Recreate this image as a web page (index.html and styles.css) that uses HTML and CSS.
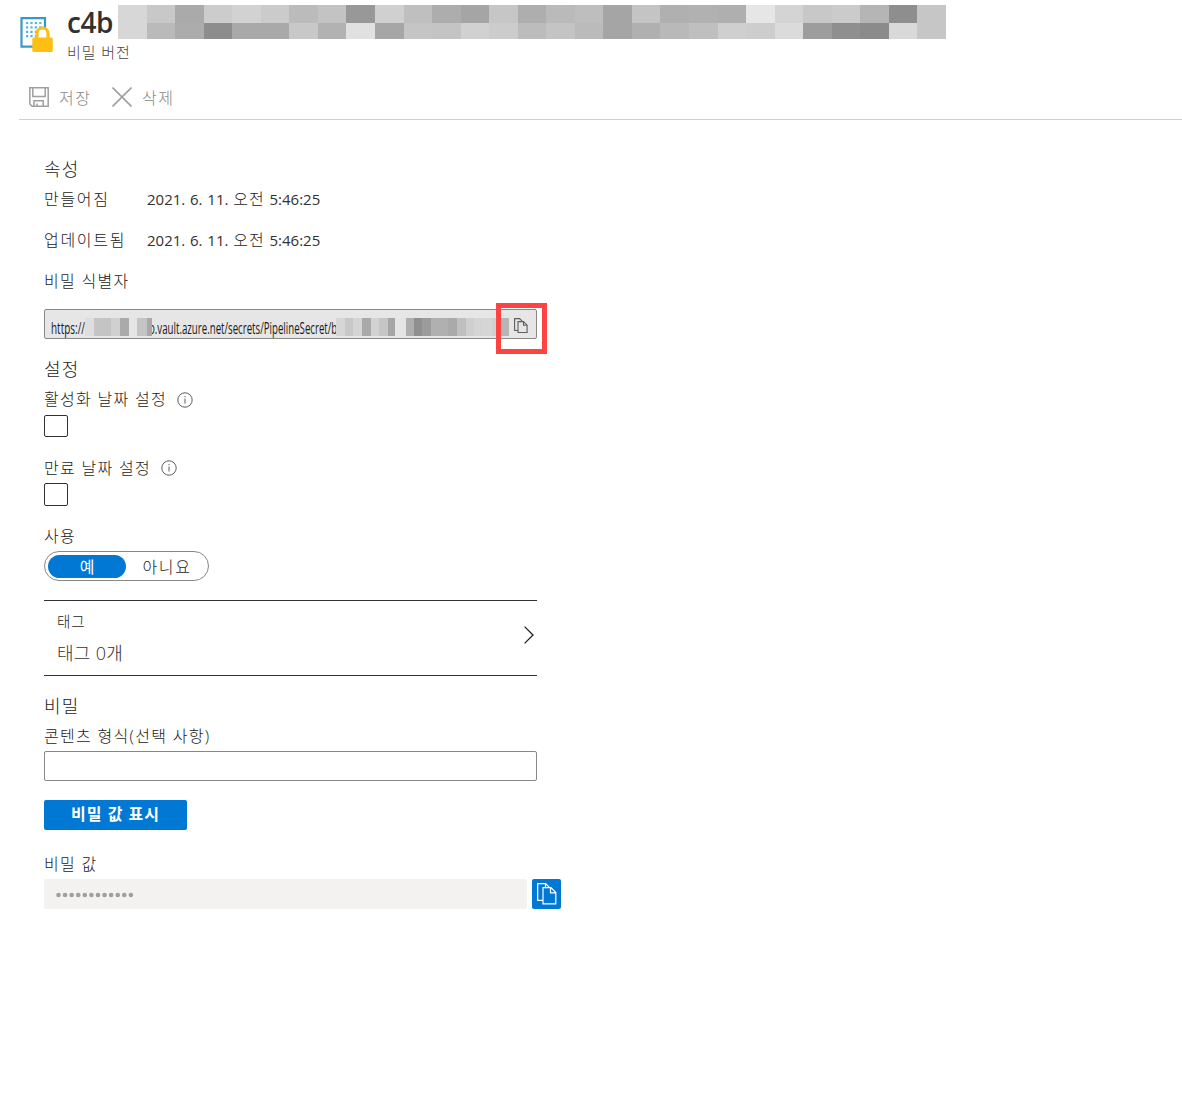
FILE: index.html
```html
<!DOCTYPE html>
<html lang="ko">
<head>
<meta charset="utf-8">
<title>비밀 버전</title>
<link rel="stylesheet" href="styles.css">
</head>
<body>
<header class="header">
  <svg class="logo" width="34" height="37" viewBox="0 0 34 37">
    <path d="M1.500 2.200h23.500v28.500H1.500z" fill="#fff" stroke="#3999c6" stroke-width="2.2"/>
    <path d="M6 7h16M6 11.400h16M6 15.800h16M6 20.200h16" stroke="#59b4d9" stroke-width="2.2" stroke-dasharray="2.200 2.200"/>
    <path d="M17 22v-4.500a5.500 5.500 0 0 1 11 0V22" fill="#fff" stroke="#fcbf12" stroke-width="3.2"/>
    <rect x="12.300" y="21.500" width="20.500" height="14.500" rx="1.500" fill="#fcbf12"/>
  </svg>
  <div class="heading">
    <div class="title-row"><h1 class="title">c4b</h1><div class="mosaic" id="title-mask"></div></div>
    <div class="subtitle">비밀 버전</div>
  </div>
</header>
<div class="toolbar">
  <svg width="20" height="20" viewBox="0 0 20 20" fill="none" stroke="#a19f9d" stroke-width="1.5"><path d="M.8.8h18.4v18.4H3L.8 17zM3.8.8v8.7h12.4V.8M5 19v-5.2h9.2V19M8 19v-2.5"/></svg>
  <span class="tool save">저장</span>
  <svg width="20" height="20" viewBox="0 0 20 20" fill="none" stroke="#a19f9d" stroke-width="1.6"><path d="M.5.5l19 19M19.5.5l-19 19"/></svg>
  <span class="tool">삭제</span>
</div>
<main class="content">
  <h2 class="section">속성</h2>
  <div class="row"><span class="name">만들어짐</span><span class="date">2021. 6. 11. <span class="meridiem">오전</span> 5:46:25</span></div>
  <div class="row updated"><span class="name">업데이트됨</span><span class="date">2021. 6. 11. <span class="meridiem">오전</span> 5:46:25</span></div>
  <div class="row identifier-label">비밀 식별자</div>
  <div class="identifier">
    <span class="url scheme"><span class="squeeze">https://</span></span>
    <span class="mosaic small" id="host-mask"></span>
    <span class="url path"><span class="squeeze">o.vault.azure.net/secrets/PipelineSecret/b</span></span>
    <span class="mosaic small" id="id-mask"></span>
    <svg class="copy" width="14" height="16" viewBox="0 0 14 16" fill="none" stroke="#605e5c" stroke-width="1.1"><path d="M4 12.5H.6V.6h5l2.6 2.6M4 3.600h5.500l3.600 3.600v7.300H4zM9.500 3.600v3.600h3.600"/></svg>
    <div class="highlight"></div>
  </div>
  <h2 class="section settings">설정</h2>
  <div class="row">활성화 날짜 설정<svg class="info" width="16" height="16" viewBox="0 0 16 16" fill="none" stroke="#605e5c"><circle cx="8" cy="8" r="7.200"/><path d="M8 6.500v5M8 4v1.200"/></svg></div>
  <div class="check"></div>
  <div class="row expires">만료 날짜 설정<svg class="info" width="16" height="16" viewBox="0 0 16 16" fill="none" stroke="#605e5c"><circle cx="8" cy="8" r="7.200"/><path d="M8 6.500v5M8 4v1.200"/></svg></div>
  <div class="check second"></div>
  <div class="row enabled">사용</div>
  <div class="toggle"><span class="on">예</span><span class="off">아니요</span></div>
  <div class="tags">
    <div><div class="tag-label">태그</div><div class="tag-count">태그 0개</div></div>
    <svg width="10" height="18" viewBox="0 0 10 18" fill="none" stroke="#201f1e" stroke-width="1.300"><path d="M.6.6L9 9 .6 17.400"/></svg>
  </div>
  <h2 class="section secret">비밀</h2>
  <div class="row">콘텐츠 형식(선택 사항)</div>
  <div class="field"></div>
  <div class="button">비밀 값 표시</div>
  <div class="row value-label">비밀 값</div>
  <div class="value-row">
    <div class="value"><svg width="78" height="6" viewBox="0 0 78 6"><path d="M2.500 3h73" stroke="#a19f9d" stroke-width="4.600" stroke-linecap="round" stroke-dasharray="0 6.580"/></svg></div>
    <div class="copy-button"><svg width="20" height="22" viewBox="0 0 20 22" fill="none" stroke="#fff" stroke-width="1.200"><path d="M6 17.400H.7V.7h8l4 4M6 4.700h8l4.800 4.800v11.300H6zM13.500 4.700v5.200h5.300M8.500.7v4"/></svg></div>
  </div>
</main>
<script src="script.js"></script>
</body>
</html>
```
FILE: styles.css
```css
* { box-sizing: border-box; }
body { margin: 0; background: #fff; color: #1b1a19; font: 300 16px/20px "Open Sans", "Noto Sans CJK KR", sans-serif; overflow: hidden; }
h1, h2 { margin: 0; font-weight: 300; }
svg { display: block; flex: none; }
.header { display: flex; height: 75px; padding-left: 20px; }
.logo { margin: 16px 13px 0 0; }
.title-row { display: flex; height: 41px; padding-top: 5px; }
.title { width: 47px; height: 36px; color: #323130; font-size: 28px; font-weight: 600; line-height: 35px; letter-spacing: -0.4px; margin-right: 4px; }
.mosaic { display: grid; grid-auto-flow: column; grid-template-rows: 18px 16px; width: 828px; height: 34px; }
#title-mask { grid-auto-columns: 1fr; }
.subtitle { padding-top: 1px; font-size: 15px; color: #484644; letter-spacing: 0.9px; }
.toolbar { display: flex; align-items: center; height: 45px; margin-left: 19px; padding-left: 10px; border-bottom: 1px solid #d2d0ce; color: #8a8886; }
.tool { margin-left: 10px; padding-top: 2px; letter-spacing: 1.6px; }
.save { width: 53px; }
.content { width: 600px; padding: 37px 0 0 44px; }
.section { height: 24px; margin-bottom: 8px; font-size: 18px; line-height: 24px; letter-spacing: 1.2px; }
.row { display: flex; height: 20px; line-height: 21px; letter-spacing: 1.3px; white-space: pre; }
.name { width: 103px; letter-spacing: 1.7px; }
.date { color: #323130; font-size: 15px; font-weight: 400; letter-spacing: 0; word-spacing: 0.9px; }
.meridiem { color: #1b1a19; font-size: 16px; font-weight: 300; letter-spacing: 1px; }
.updated, .identifier-label { margin-top: 21px; }
.identifier { position: relative; display: flex; width: 493px; height: 30px; margin-top: 18px; padding: 8px 0 0 6px; border: 1px solid #8a8886; border-radius: 2px; background: #e6e6e6; }
.url { font-size: 17px; font-weight: 400; height: 20px; white-space: nowrap; }
.squeeze { display: inline-block; transform: scaleX(.585); transform-origin: 0 0; }
.scheme { width: 34px; }
.path { width: 187px; margin-left: -3px; }
.path .squeeze { transform: scaleX(.569); }
.small { display: flex; width: auto; height: 18px; position: relative; z-index: 1; }
.copy { margin: 0 0 0 5px; }
.highlight { position: absolute; z-index: 2; left: 451px; top: -7px; width: 51px; height: 51px; border: 5px solid #ff4343; }
.settings { margin-top: 18px; }
.info { margin: 3px 0 0 10px; }
.check { width: 24px; height: 22px; margin-top: 6px; border: 1px solid #323130; border-radius: 2px; }
.expires { margin-top: 21px; }
.expires .info { margin-top: 2px; }
.second { height: 23px; margin-top: 5px; }
.enabled { margin-top: 20px; }
.toggle { display: flex; width: 165px; height: 30px; margin-top: 5px; padding: 3px; border: 1px solid #8a8886; border-radius: 15px; line-height: 25px; text-align: center; }
.on { width: 78px; height: 23px; border-radius: 12px; background: #0078d4; color: #fff; font-weight: 400; }
.off { flex: 1; letter-spacing: 1.6px; padding-left: 3px; }
.tags { display: flex; justify-content: space-between; align-items: center; width: 493px; height: 76px; margin-top: 19px; padding: 0 3px 6px 13px; border-top: 1px solid #323130; border-bottom: 1px solid #323130; }
.tag-label { font-size: 14.5px; line-height: 20px; margin-top: 7px; letter-spacing: 1px; }
.tag-count { color: #323130; font-size: 18px; line-height: 24px; margin-top: 9px; letter-spacing: 0.3px; }
.secret { margin-top: 18px; }
.field { width: 493px; height: 30px; margin-top: 5px; border: 1px solid #8a8886; border-radius: 2px; }
.button { width: 143px; height: 30px; margin-top: 19px; border-radius: 2px; background: #0078d4; color: #fff; text-align: center; line-height: 29px; font-weight: 700; letter-spacing: 1px; }
.value-label { margin-top: 24px; }
.value-row { display: flex; gap: 5px; margin-top: 5px; }
.value { display: flex; align-items: center; width: 483px; height: 30px; padding: 2px 0 0 12px; background: #f3f2f1; border-radius: 2px; }
.copy-button { width: 29px; height: 30px; padding: 4px 0 0 5px; border-radius: 2px; background: #0078d4; }
```
FILE: script.js
```js
const top1 = "d7 c8 aa cc d2 cb bb c3 98 d0 bf ad a5 c6 ae ba be a5 c4 b0 b1 af e6 d4 c8 cb b5 8e c6".split(" ");
const top2 = "d7 ba ac 8d a9 a9 c8 b2 e1 a6 c5 c4 d1 cc bc c4 bb a5 b0 b9 bf cf cd db 9d 8f 8b d9 c6".split(" ");
function cell(id, tone, width) {
  const s = document.createElement("span");
  s.style.background = "#" + tone.repeat(3);
  if (width) s.style.width = width + "px";
  document.getElementById(id).append(s);
}
top1.forEach((tone, i) => { cell("title-mask", tone); cell("title-mask", top2[i]); });
[["de", 9], ["c4", 17], ["d0", 9], ["aa", 9], ["e5", 8], ["c4", 10], ["a9", 5]].forEach(([t, w]) => cell("host-mask", t, w));
[["d6", 9], ["c8", 8], ["d4", 9], ["a9", 9], ["d2", 8], ["c6", 9], ["a6", 7], ["e5", 11], ["ae", 8], ["8f", 8], ["9b", 9], ["b0", 17], ["aa", 9], ["bf", 9], ["cf", 8], ["d4", 9], ["d6", 9], ["d0", 9], ["b5", 8]].forEach(([t, w]) => cell("id-mask", t, w));
```
